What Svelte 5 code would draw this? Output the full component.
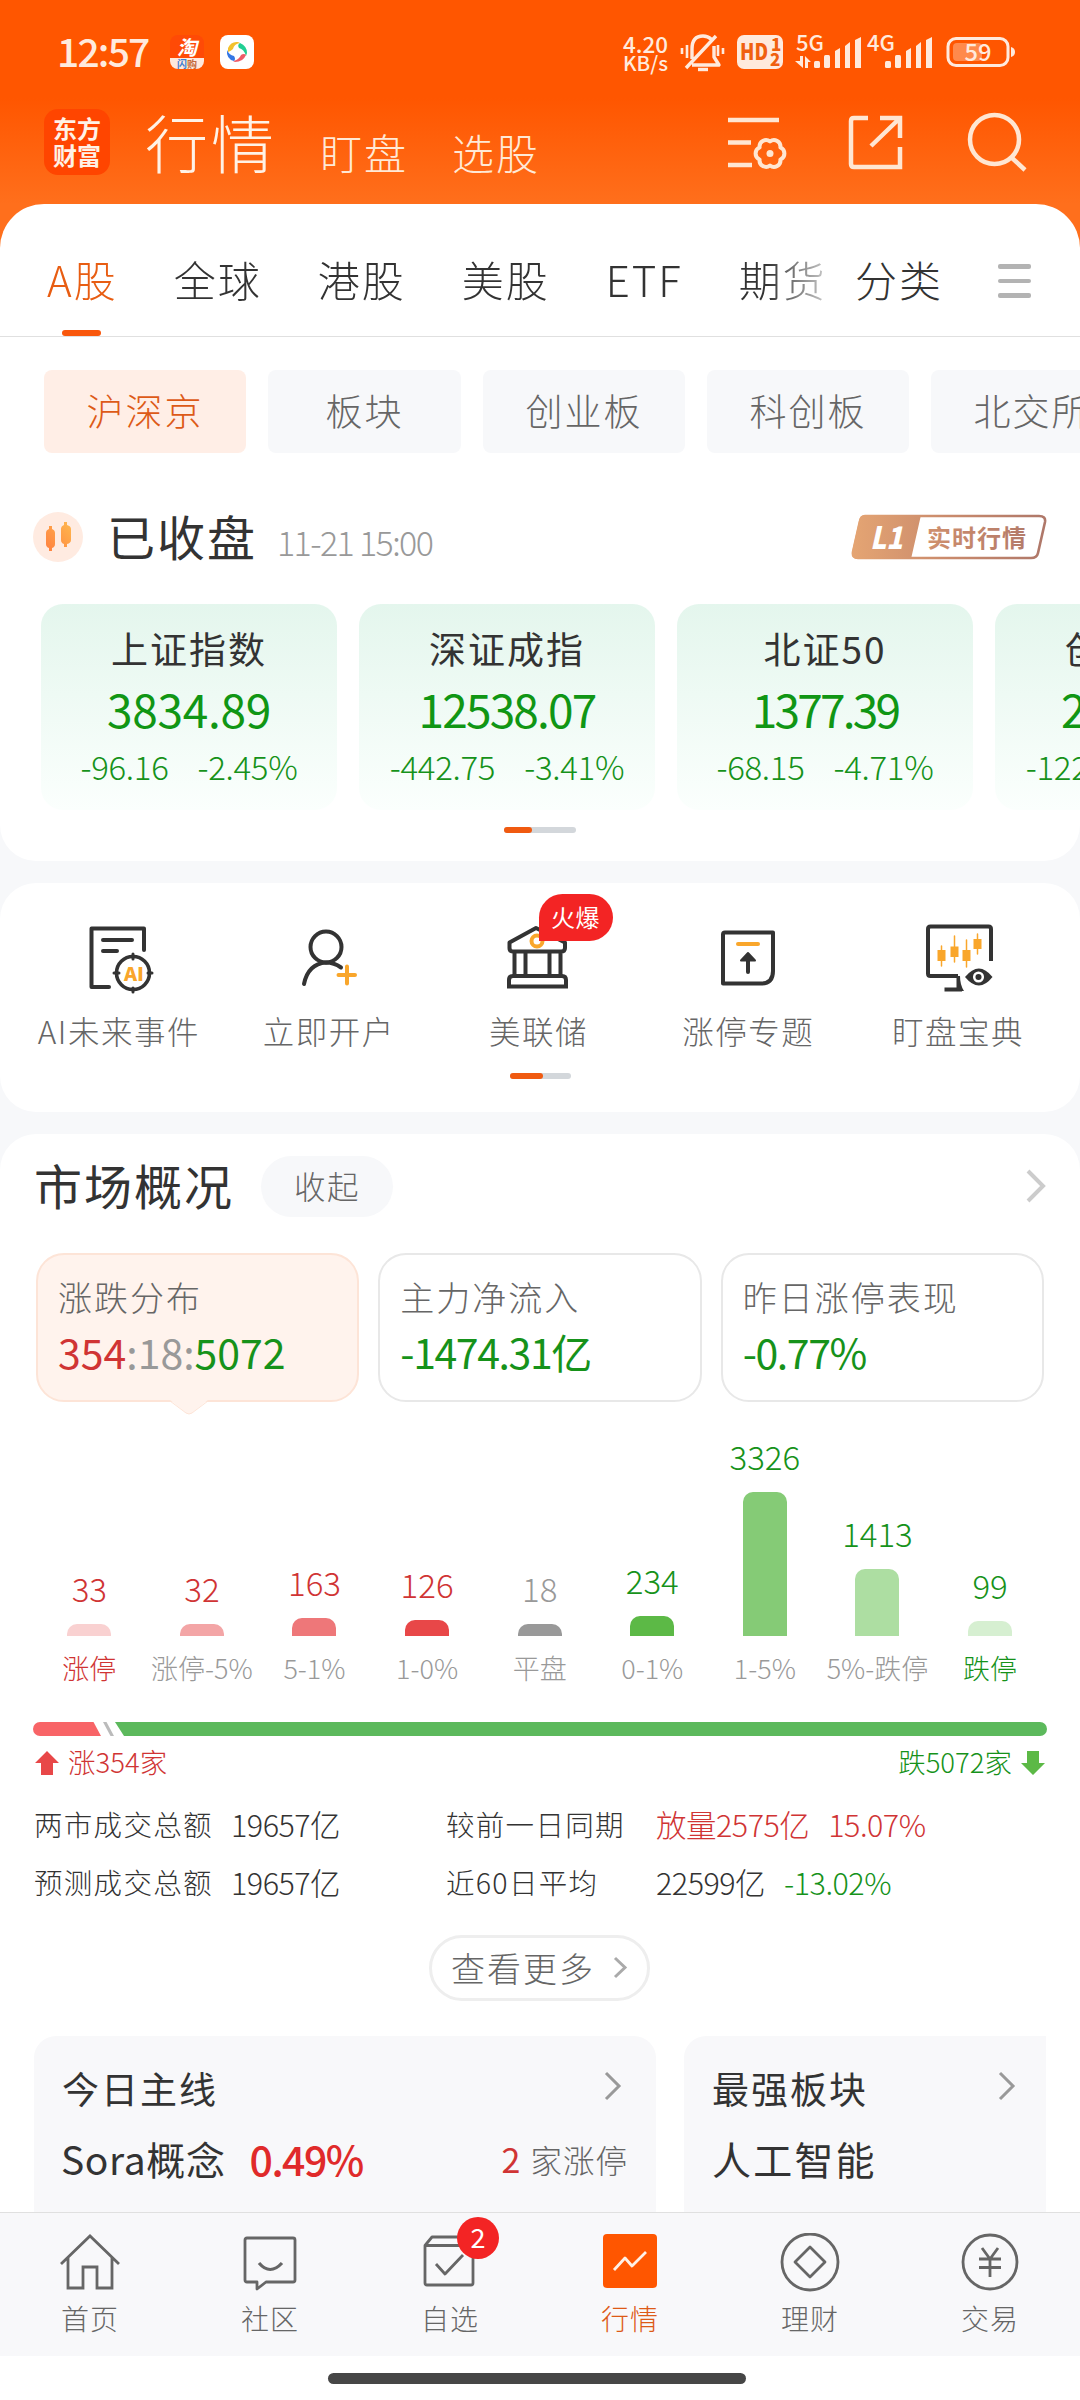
<script lang="ts">
  const tabs = ['A股', '全球', '港股', '美股', 'ETF', '期货'];
  const chips = ['沪深京', '板块', '创业板', '科创板', '北交所'];

  const indices = [
    { name: '上证指数', value: '3834.89', diff: '-96.16', pct: '-2.45%', tracking: -0.3 },
    { name: '深证成指', value: '12538.07', diff: '-442.75', pct: '-3.41%', tracking: -1.8 },
    { name: '北证50', value: '1377.39', diff: '-68.15', pct: '-4.71%', tracking: -2.8 },
    { name: '创业板指', value: '2920.08', diff: '-122.26', pct: '-4.02%', tracking: -0.3 }
  ];

  const shortcuts = [
    { icon: 'ai', label: 'AI未来事件' },
    { icon: 'user', label: '立即开户' },
    { icon: 'bank', label: '美联储', badge: '火爆' },
    { icon: 'limit', label: '涨停专题' },
    { icon: 'monitor', label: '盯盘宝典' }
  ];

  const bars = [
    { count: 33, label: '涨停', height: 12, color: '#f9d1d1', tone: 'red', strong: true },
    { count: 32, label: '涨停-5%', height: 12, color: '#f3a5a6', tone: 'red' },
    { count: 163, label: '5-1%', height: 18, color: '#ee7779', tone: 'red' },
    { count: 126, label: '1-0%', height: 16, color: '#e84748', tone: 'red' },
    { count: 18, label: '平盘', height: 12, color: '#999999', tone: 'gray' },
    { count: 234, label: '0-1%', height: 20, color: '#5cb946', tone: 'green' },
    { count: 3326, label: '1-5%', height: 144, color: '#85cb76', tone: 'green' },
    { count: 1413, label: '5%-跌停', height: 67, color: '#addea2', tone: 'green' },
    { count: 99, label: '跌停', height: 15, color: '#d6efd1', tone: 'green', strong: true }
  ];

  const navs = [
    { icon: 'home', label: '首页' },
    { icon: 'chat', label: '社区' },
    { icon: 'box', label: '自选', badge: 2 },
    { icon: 'quote', label: '行情' },
    { icon: 'wealth', label: '理财' },
    { icon: 'trade', label: '交易' }
  ];

  let tab = $state('A股');
  let chip = $state('沪深京');
  let nav = $state('行情');
</script>

{#snippet chevron(w: number, h: number, color: string, sw: number)}
  <svg class="chevron" width={w} height={h} viewBox="0 0 {w} {h}">
    <path d="M2 2L{w - 3} {h / 2}L2 {h - 2}" fill="none" stroke={color} stroke-width={sw} />
  </svg>
{/snippet}

<div class="page">
  <header>
    <div class="statusbar">
      <span class="time">12:57</span>
      <svg class="app" width="34" height="34" viewBox="0 0 34 34">
        <rect width="34" height="34" rx="8" fill="#ff4a06" />
        <path d="M0 23H34V26A8 8 0 0 1 26 34H8A8 8 0 0 1 0 26Z" fill="#ffe9dc" />
        <text x="17" y="20" class="tao">淘</text>
        <text x="17" y="32.500" class="tao-sub"><tspan fill="#3f7fd0">闪</tspan>购</text>
      </svg>
      <svg class="app second" width="34" height="34" viewBox="0 0 34 34">
        <rect width="34" height="34" rx="8" fill="#fff" />
        <path d="M8 13Q11 6 18 7L20 8Q14 9 13 14Q11 16 8 17Z" fill="#f3c12d" />
        <path d="M20 8Q27 11 27 18L26 21Q24 14 19 13Q17 10 20 8Z" fill="#21cf93" />
        <path d="M26 20Q23 27 15 27L13 26Q19 25 21 20Q24 18 26 20Z" fill="#ef5a66" />
        <path d="M7 15Q9 20 14 21Q16 24 14 26Q6 24 7 15Z" fill="#3577e5" />
      </svg>
      <svg class="signals" width="400" height="46" viewBox="620 30 400 46">
        <g class="tiny">
          <text x="623" y="52.500" textLength="45" lengthAdjust="spacingAndGlyphs">4.20</text>
          <text x="623" y="71" textLength="45" lengthAdjust="spacingAndGlyphs" class="unit">KB/s</text>
          <text x="796" y="50.500" textLength="28" lengthAdjust="spacingAndGlyphs">5G</text>
          <text x="867" y="50.500" textLength="28" lengthAdjust="spacingAndGlyphs">4G</text>
        </g>
        <g fill="none" stroke="#ffeadd" stroke-width="3.400">
          <path d="M692 59V49Q692 36 703 36Q708 36 711 39M714 46V57L719 65H692M686 68L716 36" stroke-linejoin="round" />
          <path d="M682 48V54M687 45V58M723 48V54M718 45V56" stroke-width="2.600" />
          <path d="M698 69.500H708" />
        </g>
        <rect x="737" y="35" width="46" height="34" rx="7" fill="#ffeadd" />
        <text x="740" y="60" class="hd" textLength="28" lengthAdjust="spacingAndGlyphs">HD</text>
        <text x="771" y="51" class="hd-n">1</text>
        <text x="770" y="66" class="hd-n">2</text>
        <g fill="#ffeadd">
          <path d="M800 56H803V68L795 61H800ZM805 68V56L811 62H808V68Z" />
          <rect x="814" y="61" width="6" height="7" rx="1.500" />
          <rect x="824" y="55" width="6" height="13" rx="1.500" />
          <path d="M835 51L840 48V68H835ZM845 46L850 42V68H845ZM855 40L861 37V68H855Z" />
          <rect x="885" y="61" width="6" height="7" rx="1.500" />
          <rect x="895" y="55" width="6" height="13" rx="1.500" />
          <path d="M906 51L911 48V68H906ZM916 46L921 42V68H916ZM926 40L932 37V68H926Z" />
          <path d="M1011 47Q1015 48 1015 52Q1015 56 1011 57Z" />
        </g>
        <rect x="948" y="38.500" width="60" height="27" rx="8" fill="none" stroke="#ffeadd" stroke-width="3" />
        <rect x="953" y="43" width="29" height="18" rx="4" fill="#ff8a4c" />
        <text x="978" y="61" class="battery" textLength="27" lengthAdjust="spacingAndGlyphs">59</text>
      </svg>
    </div>
    <div class="titlebar">
      <div class="logo"><span>东方</span><span>财富</span></div>
      <h1>行情</h1>
      <span class="sub first">盯盘</span>
      <span class="sub">选股</span>
      <svg class="actions" width="300" height="60" viewBox="728 111 300 60" fill="none" stroke="#ffe6d2" stroke-width="4.500">
        <path d="M728 119H779M728 141.500H751M728 164H752" />
        <path d="M770 140.500A6.500 6.500 0 0 1 780.400 146.500A6.500 6.500 0 0 1 780.400 158.500A6.500 6.500 0 0 1 770 164.500A6.500 6.500 0 0 1 759.600 158.500A6.500 6.500 0 0 1 759.600 146.500A6.500 6.500 0 0 1 770 140.500Z" stroke-width="4" stroke-linejoin="round" />
        <circle cx="770" cy="152.500" r="3.500" fill="#ffe6d2" stroke="none" />
        <path d="M868 117H854Q851 117 851 120V163Q851 166 854 166H900V146M880 117H900V137M899 118L871 145" />
        <circle cx="994.500" cy="138.500" r="24.500" />
        <path d="M1011 156L1025 169" />
      </svg>
    </div>
  </header>

  <main>
    <section class="panel market">
      <nav class="tabs">
        <div class="tablist">
          {#each tabs as t}
            <button class:active={tab === t} onclick={() => (tab = t)}>{t}</button>
          {/each}
        </div>
        <button class="category">分类</button>
        <div class="menu"><i></i><i></i><i></i></div>
      </nav>

      <div class="chips">
        {#each chips as c}
          <button class:active={chip === c} class:short={c.length < 3} onclick={() => (chip = c)}>{c}</button>
        {/each}
      </div>

      <div class="closed">
        <svg width="50" height="50" viewBox="0 0 50 50">
          <defs>
            <linearGradient id="candle" x1="0" y1="1" x2="1" y2="0">
              <stop offset="0" stop-color="#ff8040" />
              <stop offset="1" stop-color="#ffb84e" />
            </linearGradient>
          </defs>
          <circle cx="25" cy="25" r="25" fill="#ffebe1" />
          <path d="M16 14H19V17Q22 18 22 21V32Q22 35 19 36V39H16V36Q13 35 13 32V21Q13 18 16 17ZM31 10H34V13Q38 14 38 17V28Q38 31 34 32V35H31V32Q28 31 28 28V17Q28 14 31 13Z" fill="url(#candle)" />
        </svg>
        <h2>已收盘</h2>
        <time>11-21 15:00</time>
        <svg class="level" width="196" height="46" viewBox="0 0 196 46">
          <defs>
            <linearGradient id="copper" gradientUnits="userSpaceOnUse" x1="0" y1="0" x2="196" y2="0">
              <stop offset="0" stop-color="#e5a573" />
              <stop offset="0.500" stop-color="#c98a6c" />
              <stop offset="1" stop-color="#ae7769" />
            </linearGradient>
          </defs>
          <path d="M14 2H188Q195 2 194 8L187 39Q186 44 180 44H7Q1 44 2 38L9 7Q10 2 14 2Z" fill="#fff" stroke="url(#copper)" stroke-width="2.600" />
          <path d="M14 1H70L60 45H7Q0 45 1 38L8 7Q9 1 14 1Z" fill="url(#copper)" />
          <text x="19" y="35" class="l1" textLength="33" lengthAdjust="spacingAndGlyphs">L1</text>
          <text x="76" y="33" class="live" textLength="99">实时行情</text>
        </svg>
      </div>

      <div class="indices">
        {#each indices as idx}
          <div class="index">
            <h3>{idx.name}</h3>
            <strong style="letter-spacing: {idx.tracking}px">{idx.value}</strong>
            <p><span>{idx.diff}</span><span>{idx.pct}</span></p>
          </div>
        {/each}
      </div>
      <div class="pager wide"><i></i></div>
    </section>

    <section class="panel shortcuts">
      <div class="grid">
        {#each shortcuts as s}
          <div class="shortcut">
            <svg width="76" height="76" viewBox="0 0 76 76" fill="none" stroke="#333" stroke-width="4" stroke-linecap="round" stroke-linejoin="round">
              {#if s.icon === 'ai'}
                <path d="M28 68H10.500V9.500H63V31M22 21H51M22 32H36" />
                <circle cx="52" cy="54" r="16.500" stroke-width="3.600" />
                <path d="M52 35V40M52 69V73M33 54H38M67 54H71" stroke-width="3" />
                <text x="43" y="61.500" class="ai" textLength="20" lengthAdjust="spacingAndGlyphs">AI</text>
              {:else if s.icon === 'user'}
                <circle cx="35" cy="28" r="15.500" />
                <path d="M13 65Q17 45 35 43.500Q43 43.500 50 48.500" />
                <path d="M47.500 56H64M56 47.500V64.500" stroke="#f9a62b" />
              {:else if s.icon === 'bank'}
                <path d="M9.500 23.500L36 9L65 23.500V29Q65 32.500 61 32.500H13Q9.500 32.500 9.500 29ZM14.500 34V56M25.500 34V56M49.500 34V56M60.500 34V56" />
                <path d="M9 67.500V61Q9 57 13 57H62Q66 57 66 61V67.500Z" stroke-linejoin="miter" />
                <circle cx="37" cy="22" r="5.500" stroke="#f9a62b" />
              {:else if s.icon === 'limit'}
                <path d="M15 13.500H63V52Q63 64.500 51 64.500H13V15.500Q13 13.500 15 13.500Z" />
                <path d="M28 25H48" stroke="#f9a62b" />
                <path d="M38 38V53" />
                <path d="M38 34L45 41.500H31Z" fill="#333" stroke-width="2" />
              {:else}
                <path d="M71 42V10Q71 7.500 68.500 7.500H10.500Q8 7.500 8 10V54.500Q8 57 10.500 57H38M24.500 70.500H42" stroke-linecap="butt" />
                <path d="M36.500 57H40Q40 66 44 72H36.500Z" fill="#333" stroke="none" />
                <path d="M21.500 27V47M34.500 17V43M46.500 21V48M57.500 15V35" stroke="#f9a62b" stroke-width="1.500" />
                <path d="M21.500 31V42M34.500 27.500V38M46.500 31V42M57.500 20V30" stroke="#f9a62b" stroke-width="8" stroke-linecap="butt" />
                <path d="M45 58Q59 41 72.500 58Q59 75 45 58Z" fill="#333" stroke="none" />
                <circle cx="58.500" cy="58" r="4.300" stroke="#fff" stroke-width="2.500" />
              {/if}
            </svg>
            <span>{s.label}</span>
            {#if s.badge}<em>{s.badge}</em>{/if}
          </div>
        {/each}
      </div>
      <div class="pager"><i></i></div>
    </section>

    <section class="panel overview">
      <div class="heading">
        <h2>市场概况</h2>
        <button>收起</button>
        {@render chevron(20, 34, '#cccccc', 4)}
      </div>

      <div class="boxes">
        <div class="box active">
          <span>涨跌分布</span>
          <b><i class="red">354</i><i class="gray">:18:</i><i class="green">5072</i></b>
          <svg class="pointer" width="38" height="15" viewBox="0 0 38 15">
            <path d="M0 0L16 13Q19 15 22 13L38 0Z" fill="#fff3ed" />
            <path d="M0 1L16 13Q19 15 22 13L38 1" fill="none" stroke="#fde4d7" stroke-width="1" />
          </svg>
        </div>
        <div class="box"><span>主力净流入</span><b class="green tight">-1474.31亿</b></div>
        <div class="box"><span>昨日涨停表现</span><b class="green tight">-0.77%</b></div>
      </div>

      <div class="chart">
        {#each bars as b}
          <div class="col">
            <span class="count {b.tone}">{b.count}</span>
            <div class="bar" style="height: {b.height}px; background: {b.color}"></div>
            <span class="range {b.strong ? b.tone : 'gray'}">{b.label}</span>
          </div>
        {/each}
      </div>

      <svg class="ratio" width="1014" height="14" viewBox="0 0 1014 14">
        <path d="M7 0H60.500L68 14H7A7 7 0 0 1 7 0Z" fill="#f86467" />
        <path d="M70 0H73.500L81 14H77.500Z" fill="#bbb" />
        <path d="M82 0H1007A7 7 0 0 1 1007 14H91Z" fill="#5cb95c" />
      </svg>
      <div class="legend">
        <svg width="24" height="24" viewBox="0 0 24 24"><path d="M12 0L24 12H18V24H6V12H0Z" fill="#e84748" /></svg>
        <span class="red">涨354家</span>
        <span class="green down">跌5072家</span>
        <svg width="24" height="24" viewBox="0 0 24 24"><path d="M12 24L24 12H18V0H6V12H0Z" fill="#5cb946" /></svg>
      </div>

      <div class="stats">
        <span>两市成交总额</span><span class="num">19657亿</span>
        <span>较前一日同期</span><span class="num red">放量2575亿<i>15.07%</i></span>
        <span>预测成交总额</span><span class="num">19657亿</span>
        <span>近60日平均</span><span class="num">22599亿<i class="green">-13.02%</i></span>
      </div>

      <button class="more">查看更多 {@render chevron(15, 23, '#aaaaaa', 3)}</button>

      <div class="themes">
        <div class="theme">
          <div class="line"><h4>今日主线</h4>{@render chevron(18, 30, '#999999', 3)}</div>
          <div class="line second">
            <h5 class="latin">Sora概念</h5>
            <strong>0.49%</strong>
            <span class="tail"><b>2</b>家涨停</span>
          </div>
        </div>
        <div class="theme cut">
          <div class="line"><h4>最强板块</h4>{@render chevron(18, 30, '#999999', 3)}</div>
          <div class="line second"><h5>人工智能</h5></div>
        </div>
      </div>
    </section>
  </main>

  <footer>
    <nav class="navbar">
      {#each navs as n}
        <button class:active={nav === n.label} onclick={() => (nav = n.label)}>
          <svg width="60" height="60" viewBox="0 0 60 60" fill="none" stroke="#666" stroke-width="2.800" stroke-linejoin="round">
            {#if n.icon === 'home'}
              <path d="M1 31L30 3L59 31M8 25V55H23V34H37V55H52V25" stroke-linejoin="miter" />
            {:else if n.icon === 'chat'}
              <path d="M7 5H53Q55 5 55 7V47Q55 49 53 49H26L17 56V49H7Q5 49 5 47V7Q5 5 7 5Z" />
              <path d="M19 30Q30 43 42 30" stroke-width="3.200" />
            {:else if n.icon === 'box'}
              <path d="M5 12.500H53V50Q53 52 51 52H7Q5 52 5 50V12.500L12 4H46L53 12.500" />
              <path d="M16 31L25 41L43 22" />
            {:else if n.icon === 'quote'}
              <rect x="3" y="1" width="54" height="54" rx="4" fill="#ff5600" stroke="none" />
              <path d="M14 37L25 25L32 33L46 19" stroke="#fff0e6" />
            {:else if n.icon === 'wealth'}
              <ellipse cx="30" cy="29" rx="28" ry="28" />
              <path d="M30 14L45 29L30 44L15 29Z" />
            {:else}
              <circle cx="30" cy="29" r="27" />
              <path d="M22 15L30 26L38 15M30 26V44M19 26H41M19 34.500H41" />
            {/if}
          </svg>
          <span>{n.label}</span>
          {#if n.badge}<em>{n.badge}</em>{/if}
        </button>
      {/each}
    </nav>
    <div class="homebar"></div>
  </footer>
</div>

<style>
  :global(body) {
    background: #f7f8fa;
  }

  .page {
    width: 1080px;
    height: 2400px;
    overflow: hidden;
    display: flex;
    flex-direction: column;
    background: #f7f8fa;
    color: #333;
    font-family: 'Noto Sans CJK SC', sans-serif;
    font-weight: 300;
    white-space: nowrap;
  }

  button { border: none; background: none; padding: 0; font: inherit; color: inherit; letter-spacing: inherit; }
  h1, h2, h3, h4, h5, p { margin: 0; font-weight: 400; }
  i, em { font-style: normal; }
  svg { display: block; flex: none; }

  .red { color: #d03434; }
  .green { color: #16921a; }
  .gray { color: #999; }

  header {
    height: 254px;
    margin-bottom: -50px;
    flex: none;
    background: linear-gradient(#ff5600 0, #ff5600 98px, #ff6f1c 204px, #ff6f1c);
  }

  .statusbar { height: 104px; display: flex; align-items: flex-start; box-sizing: border-box; padding: 30px 60px 0 57px; }
  .time { width: 113px; line-height: 40px; font-size: 39px; font-weight: 500; letter-spacing: -1.8px; color: #ffeadd; }
  .app { margin-top: 5px; }
  .app.second { margin-left: 16px; }
  .tao { font-size: 20px; font-weight: 700; font-style: italic; fill: #fff; text-anchor: middle; }
  .tao-sub { font-size: 10px; font-weight: 700; fill: #c46a3c; text-anchor: middle; }
  .signals { margin-left: auto; }
  .tiny { font-size: 22px; font-weight: 500; fill: #ffeadd; }
  .unit { font-size: 20px; }
  .hd { font-size: 22px; font-weight: 900; fill: #f0600f; }
  .hd-n { font-size: 17px; font-weight: 900; fill: #f0600f; }
  .battery { font-size: 24px; font-weight: 500; fill: #ffeadd; text-anchor: middle; }

  .titlebar { height: 76px; display: flex; align-items: center; padding: 0 52px 0 44px; color: #fff2e6; }
  .logo {
    width: 66px; height: 66px; border-radius: 14px; background: #ff4500;
    display: flex; flex-direction: column; justify-content: center; align-items: center;
    font-size: 24px; font-weight: 700; line-height: 28px;
  }
  .logo span { margin-top: -1px; }
  .titlebar h1 { margin: -2px 0 0 35px; font-size: 63px; line-height: 76px; letter-spacing: 3px; font-weight: 300; }
  .sub { margin: 20px 0 0 44px; font-size: 42px; line-height: 50px; letter-spacing: 2px; color: #ffe9d6; }
  .sub.first { margin-left: 43px; }
  .actions { margin-left: auto; }

  main { flex: 1; min-height: 0; overflow: hidden; display: flex; flex-direction: column; gap: 22px; }
  .panel { flex: none; background: #fff; border-radius: 36px; box-sizing: border-box; }
  .market { height: 657px; border-radius: 44px 44px 36px 36px; overflow: hidden; }

  .tabs { height: 133px; box-sizing: border-box; border-bottom: 1px solid #e0e0e0; display: flex; padding-left: 47px; font-size: 42px; letter-spacing: 2px; }
  .tablist { width: 780px; display: flex; gap: 56px; mask-image: linear-gradient(to right, #000 720px, transparent 800px); }
  .tabs button { position: relative; line-height: 149px; height: 132px; }
  .tabs .active { color: #e85d12; }
  .tabs .active::after { content: ''; position: absolute; left: 15px; bottom: 0; width: 39px; height: 6px; border-radius: 3px; background: #f9570c; }
  .category { margin-left: 28px; }
  .menu { margin: 60px 0 0 55px; width: 33px; display: flex; flex-direction: column; gap: 10px; }
  .menu i { height: 4.5px; border-radius: 2px; background: #b3b3b3; }

  .chips { display: flex; gap: 22px; padding: 33px 0 0 44px; }
  .chips button { flex: none; width: 202px; height: 83px; border-radius: 8px; background: #f7f8fa; color: #666; font-size: 37px; letter-spacing: 2px; line-height: 78px; padding-bottom: 4px; }
  .chips .short { width: 193px; }
  .chips .active { background: #ffeee6; color: #dd5a17; }

  .closed { height: 74px; margin-top: 47px; display: flex; align-items: center; padding: 0 33px; }
  .closed h2 { margin: -5px 0 0 24px; font-size: 48px; line-height: 60px; letter-spacing: 2px; }
  time { margin: 9px 0 0 20px; font-size: 34px; line-height: 40px; letter-spacing: -1.6px; color: #999; }
  .level { margin-left: auto; }
  .l1 { font-size: 31px; font-weight: 900; font-style: italic; fill: #fff; }
  .live { font-size: 24px; font-weight: 700; fill: url(#copper); }

  .indices { display: flex; gap: 22px; margin-top: 30px; padding-left: 41px; }
  .index { flex: none; width: 296px; height: 206px; border-radius: 22px; background: linear-gradient(#e4f6ed, #fbfffd); text-align: center; }
  .index h3 { padding-top: 16px; font-size: 37px; line-height: 56px; letter-spacing: 2px; }
  .index strong { display: block; font-size: 46px; line-height: 65px; font-weight: 400; color: #109614; }
  .index p { display: flex; justify-content: center; gap: 29px; font-size: 33px; line-height: 51px; font-weight: 300; color: #16921a; letter-spacing: -0.3px; }

  .pager { width: 61px; height: 6px; border-radius: 3px; background: #d3d7db; margin: 0 auto; }
  .pager i { display: block; width: 33px; height: 6px; border-radius: 3px; background: #f05a10; }
  .pager.wide { width: 72px; margin-top: 17px; }
  .pager.wide i { width: 28px; }

  .shortcuts { height: 229px; }
  .grid { height: 190px; padding: 0 17px 0 14px; display: grid; grid-template-columns: repeat(5, 1fr); }
  .shortcut { position: relative; display: flex; flex-direction: column; align-items: center; padding-top: 36px; font-size: 31.5px; letter-spacing: 1.5px; color: #666; }
  .shortcut span { margin-top: 10px; line-height: 50px; }
  .shortcut em { position: absolute; left: 105px; top: 11px; width: 74px; height: 47px; border-radius: 24px 24px 24px 0; background: #f32424; color: #fff; font-size: 24px; line-height: 45px; text-align: center; letter-spacing: 0.5px; font-weight: 400; }
  .ai { font-size: 19px; font-weight: 900; fill: #f9a62b; stroke: none; letter-spacing: 0; }

  .overview { height: 1200px; padding: 0 34px; }
  .heading { height: 100px; display: flex; align-items: center; padding-top: 2px; }
  .heading h2 { margin-top: -4px; font-size: 48px; line-height: 60px; letter-spacing: 2px; }
  .heading button { width: 132px; height: 61px; margin-left: 27px; border-radius: 31px; background: #f7f8fa; font-size: 31.5px; letter-spacing: 1.5px; line-height: 56px; padding-bottom: 3px; color: #666; }
  .heading .chevron { margin-left: auto; }

  .boxes { display: flex; gap: 19px; padding: 17px 2px 0; }
  .box { position: relative; flex: 1; height: 149px; box-sizing: border-box; border: 2px solid #e8e8e8; border-radius: 28px; padding: 17px 0 0 20px; }
  .box span { display: block; font-size: 34px; letter-spacing: 2px; line-height: 50px; color: #666; }
  .box b { display: block; font-size: 41px; line-height: 58px; font-weight: 400; }
  .box .tight { letter-spacing: -1.4px; }
  .box.active { background: #fff3ed; border-color: #fde4d7; }
  .pointer { position: absolute; left: 132px; top: 145px; }

  .chart { display: grid; grid-template-columns: repeat(9, 112.6px); margin: 0 0 0 -1px; height: 286px; }
  .col { display: flex; flex-direction: column; align-items: center; justify-content: flex-end; }
  .count { font-size: 33px; line-height: 50px; margin-bottom: 11px; font-weight: 300; }
  .bar { flex: none; width: 44px; border-radius: 10px 10px 0 0; }
  .range { font-size: 27px; line-height: 40px; margin-top: 12px; }

  .ratio { margin: 34px 0 0 -1px; }
  .legend { display: flex; align-items: center; height: 48px; padding: 0 1px; margin-top: 3px; font-size: 27.5px; line-height: 40px; }
  .legend span { margin: -4px 9px 0; }
  .legend .down { margin-left: auto; }

  .stats { display: grid; grid-template-columns: 197px 215px 210px auto; grid-auto-rows: 58px; margin-top: 8px; line-height: 58px; font-size: 28.5px; letter-spacing: 1.3px; }
  .stats .num { letter-spacing: -0.5px; font-size: 30.5px; }
  .stats i { margin-left: 19px; }

  .more { display: flex; align-items: center; justify-content: center; gap: 18px; width: 221px; height: 66px; box-sizing: border-box; margin: 24px auto 0 395px; padding-bottom: 1px; border: 3px solid #eee; border-radius: 33px; font-size: 34px; line-height: 54px; letter-spacing: 2px; color: #666; }

  .themes { display: flex; gap: 28px; margin-top: 35px; }
  .theme { width: 622px; height: 220px; box-sizing: border-box; border-radius: 22px 22px 0 0; background: #f8f8fa; padding: 22px 34px 0 28px; }
  .theme.cut { width: 362px; border-radius: 22px 0 0 0; padding-right: 30px; }
  .line { display: flex; align-items: center; height: 60px; }
  .line .chevron { margin: -4px 0 0 auto; }
  .line h4 { font-size: 37px; letter-spacing: 2px; }
  .line.second { height: 70px; margin-top: 5px; }
  .line h5 { font-size: 39px; letter-spacing: 2.2px; }
  .line .latin { margin-left: -1px; letter-spacing: 0.6px; }
  .line strong { margin-left: 24px; font-size: 41px; font-weight: 500; color: #e02a2a; letter-spacing: -1.5px; }
  .tail { margin: 0 -6px 0 auto; font-size: 31.5px; letter-spacing: 1px; color: #666; }
  .tail b { margin-right: 9px; font-size: 34px; font-weight: 400; color: #d03434; }

  footer { flex: none; height: 188px; background: #fff; }
  .navbar { height: 144px; box-sizing: border-box; border-top: 1px solid #e0e0e0; background: #f8f8fa; display: grid; grid-template-columns: repeat(6, 1fr); color: #666; }
  .navbar button { position: relative; display: flex; flex-direction: column; align-items: center; padding-top: 20px; font-size: 28px; letter-spacing: 1px; }
  .navbar span { line-height: 40px; margin-top: 5px; }
  .navbar .active { color: #dd5a17; }
  .navbar em { position: absolute; left: 97px; top: 4px; width: 42px; height: 42px; border-radius: 50%; background: #f32424; color: #fff; font-size: 27px; line-height: 39px; letter-spacing: 0; font-weight: 400; text-align: center; }
  .homebar { width: 418px; height: 11px; border-radius: 6px; margin: 17px 0 0 328px; background: #464646; }
</style>
